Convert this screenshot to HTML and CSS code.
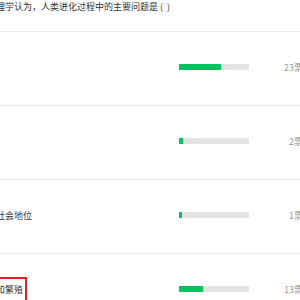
FILE: index.html
```html
<!DOCTYPE html>
<html lang="zh-CN">
<head>
  <meta charset="UTF-8">
  <meta name="viewport" content="width=device-width, initial-scale=1.0">
  <title>投票结果</title>
  <link rel="stylesheet" href="styles.css">
</head>
<body>
<div class="poll">
  <div class="question">心理学认为，人类进化过程中的主要问题是 (&nbsp;&nbsp;)</div>

  <div class="option">
    <div class="label"></div>
    <div class="bar"><div class="fill" style="width: 60%"></div></div>
    <div class="count">23票</div>
  </div>

  <div class="option">
    <div class="label"></div>
    <div class="bar"><div class="fill" style="width: 6%"></div></div>
    <div class="count">2票</div>
  </div>

  <div class="option">
    <div class="label"><span class="text">获得社会地位</span></div>
    <div class="bar"><div class="fill" style="width: 4%"></div></div>
    <div class="count">1票</div>
  </div>

  <div class="option">
    <div class="label"><span class="text marked">生存和繁殖</span></div>
    <div class="bar"><div class="fill" style="width: 34%"></div></div>
    <div class="count">13票</div>
  </div>
</div>
</body>
</html>
```

FILE: styles.css
```css
html, body {
  margin: 0;
  padding: 0;
  overflow: hidden;
}

body {
  font-family: "Noto Sans CJK SC", "Liberation Sans", sans-serif;
  font-size: 9px;
  color: #333;
  background: #fff;
}

.poll {
  width: 303px;
}

.question {
  height: 31px;
  line-height: 14px;
  white-space: nowrap;
  margin-left: -13px;
  border-bottom: 1px solid #e8e8e8;
}

.option {
  display: grid;
  grid-template-columns: 179px 70px 1fr;
  align-items: center;
  height: 70px;
  padding-bottom: 3px;
  border-bottom: 1px solid #e8e8e8;
}

.label {
  white-space: nowrap;
}

.label .text {
  display: inline-block;
  margin-left: -22px;
}

.label .marked {
  margin-left: -24px;
  padding: 4px 2px 4px 0;
  border: 2px solid #e02020;
}

.bar {
  height: 6px;
  background: #e3e3e3;
}

.fill {
  height: 100%;
  background: #07c160;
}

.count {
  text-align: right;
  color: #999;
}
```
